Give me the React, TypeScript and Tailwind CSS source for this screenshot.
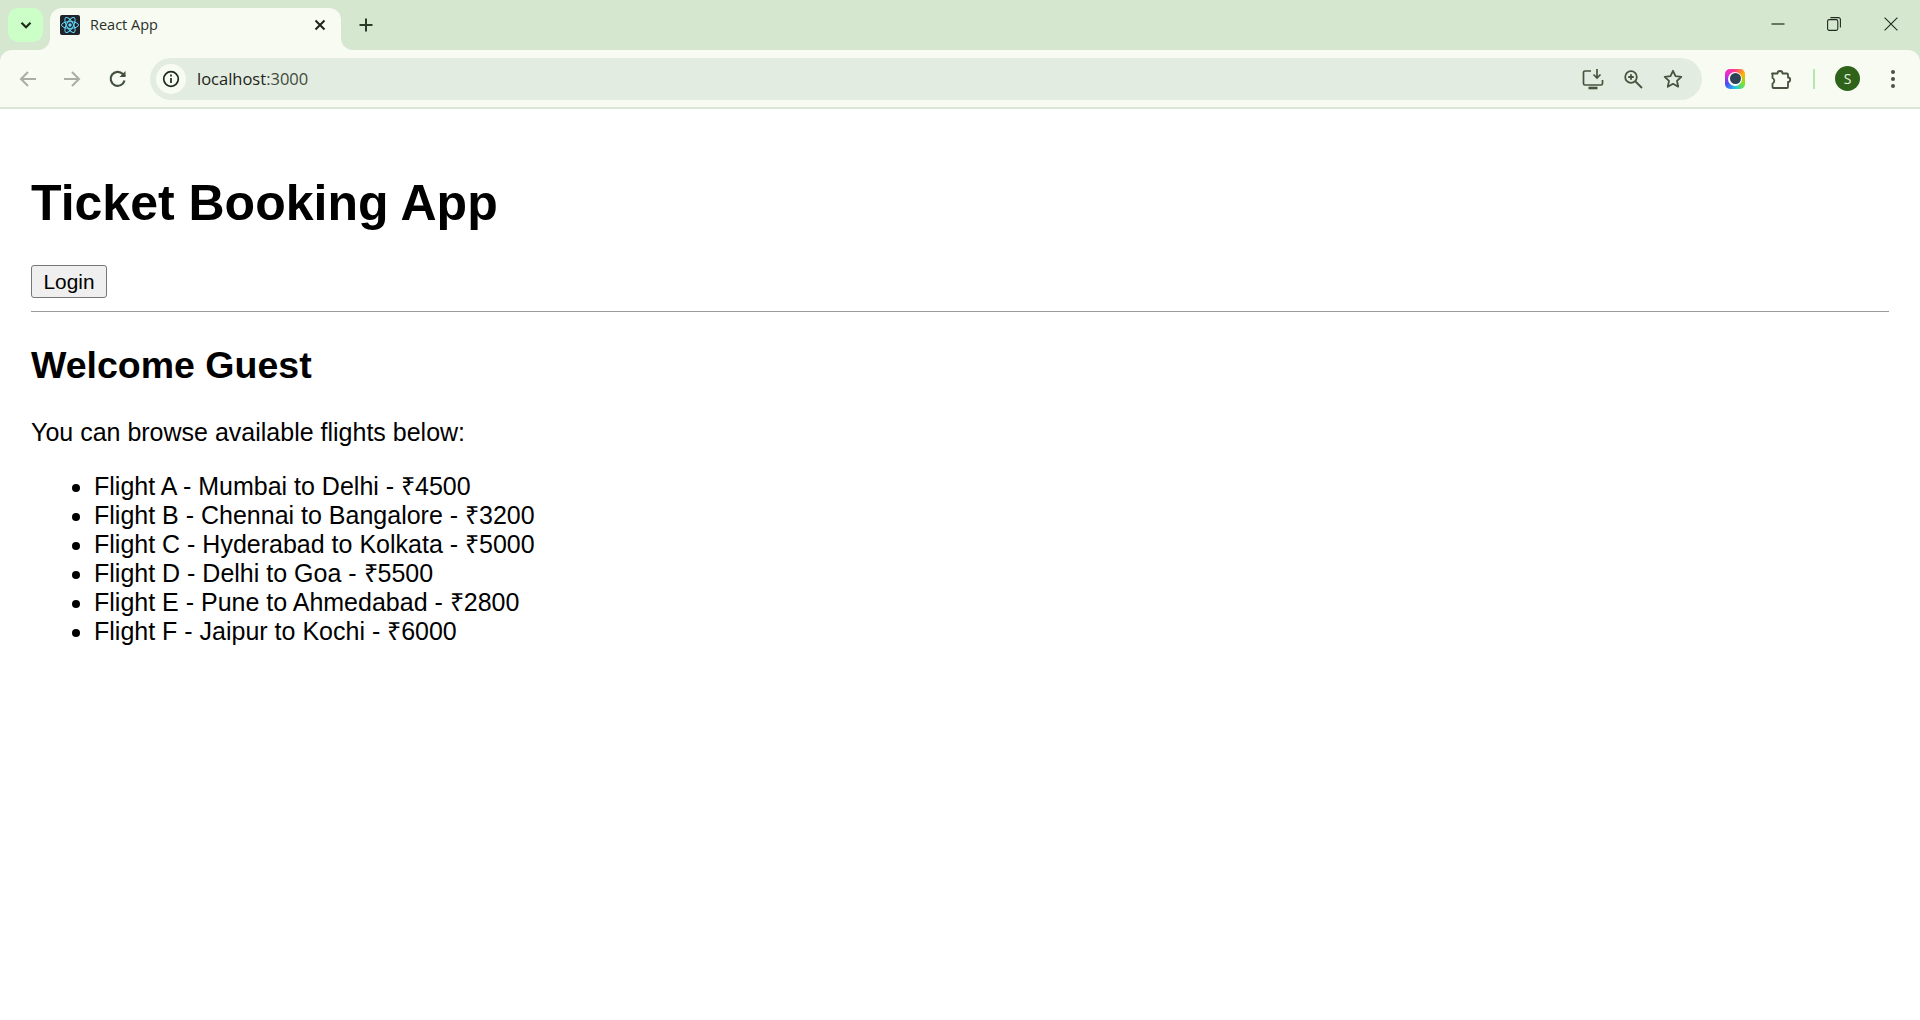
import React from "react";

const flights = [
  "Flight A - Mumbai to Delhi - ₹4500",
  "Flight B - Chennai to Bangalore - ₹3200",
  "Flight C - Hyderabad to Kolkata - ₹5000",
  "Flight D - Delhi to Goa - ₹5500",
  "Flight E - Pune to Ahmedabad - ₹2800",
  "Flight F - Jaipur to Kochi - ₹6000",
];

function ReactLogo() {
  return (
    <svg width="20" height="20" viewBox="0 0 20 20" className="rounded-[2px] bg-[#20232a]">
      <g fill="none" stroke="#61dafb" strokeWidth="1">
        <ellipse cx="10" cy="10" rx="8.5" ry="3.4" />
        <ellipse cx="10" cy="10" rx="8.5" ry="3.4" transform="rotate(60 10 10)" />
        <ellipse cx="10" cy="10" rx="8.5" ry="3.4" transform="rotate(120 10 10)" />
      </g>
      <circle cx="10" cy="10" r="1.7" fill="#61dafb" />
    </svg>
  );
}

export default function App() {
  return (
    <div className="min-h-[1020px] bg-white font-['Liberation_Sans',Arial,sans-serif] text-black">
      <header className="bg-[#d6e7d0]">
        <div className="flex h-[50px] pl-[8px]">
          <button className="mt-[8px] flex h-[34px] w-[35px] items-center justify-center rounded-[10px] bg-[#ccffc8]">
            <svg width="14" height="14" viewBox="0 0 14 14" fill="none" stroke="#1d2a1b" strokeWidth="2.2">
              <path d="M2.5 4.8 7 9.2l4.5-4.4" />
            </svg>
          </button>
          <div className="relative ml-[7px] mt-[8px] flex h-[42px] w-[291px] items-center rounded-t-[12px] bg-[#f7fbf2] pb-[8px] pl-[10px] pr-[14px]">
            <svg className="absolute bottom-0 left-[-12px]" width="12" height="12" viewBox="0 0 12 12">
              <path d="M12 0v12H0A12 12 0 0 0 12 0Z" fill="#f7fbf2" />
            </svg>
            <svg className="absolute bottom-0 right-[-12px]" width="12" height="12" viewBox="0 0 12 12">
              <path d="M0 0v12h12A12 12 0 0 1 0 0Z" fill="#f7fbf2" />
            </svg>
            <ReactLogo />
            <span className="ml-[10px] flex-1 font-['Open_Sans',sans-serif] text-[14.5px] leading-[20px] text-[#2b2f2a]">React App</span>
            <svg width="14" height="14" viewBox="0 0 14 14" fill="none" stroke="#1c241b" strokeWidth="2">
              <path d="m2.5 2.5 9 9m0-9-9 9" />
            </svg>
          </div>
          <button className="ml-[14px] mt-[8px] flex h-[34px] w-[22px] items-center justify-center">
            <svg width="16" height="16" viewBox="0 0 16 16" fill="none" stroke="#2b3a29" strokeWidth="2">
              <path d="M8 1.5v13M1.5 8h13" />
            </svg>
          </button>
          <div className="flex-1" />
          <div className="flex h-[48px] items-center">
            <span className="flex w-[56px] justify-center">
              <svg width="14" height="14" viewBox="0 0 14 14" fill="none" stroke="#1f2a1e" strokeWidth="1.2">
                <path d="M0.5 7h13" />
              </svg>
            </span>
            <span className="flex w-[56px] justify-center">
              <svg width="14" height="14" viewBox="0 0 14 14" fill="none" stroke="#1f2a1e" strokeWidth="1.1">
                <rect x="0.6" y="2.6" width="10.2" height="10.8" rx="1.6" />
                <path d="M3.4 0.6h8a2 2 0 0 1 2 2v8" />
              </svg>
            </span>
            <span className="flex w-[58px] justify-center">
              <svg width="14" height="14" viewBox="0 0 14 14" fill="none" stroke="#1f2a1e" strokeWidth="1.1">
                <path d="m0.6 0.6 12.8 12.8m0-12.8L0.6 13.4" />
              </svg>
            </span>
          </div>
        </div>
        <div className="flex h-[57px] items-center rounded-t-[12px] bg-[#f7fbf2] pl-[16px]">
          <svg width="24" height="24" viewBox="0 0 24 24" fill="none" stroke="#a9aea6" strokeWidth="2">
            <path d="M20 12H5m7-7-7 7 7 7" />
          </svg>
          <svg className="ml-[20px]" width="24" height="24" viewBox="0 0 24 24" fill="none" stroke="#a9aea6" strokeWidth="2">
            <path d="M4 12h15m-7-7 7 7-7 7" />
          </svg>
          <svg className="ml-[22px]" width="24" height="24" viewBox="0 0 24 24" fill="none" stroke="#41503e" strokeWidth="2.2">
            <path d="M18.5 13.5A7 7 0 1 1 16.8 7L19 9.2" />
            <path d="M19.5 4v6h-6Z" stroke="none" fill="#41503e" />
          </svg>
          <div className="ml-[20px] flex h-[42px] w-[1552px] items-center rounded-full bg-[#e3ece0] pl-[6px] pr-[19px]">
            <span className="flex h-[30px] w-[30px] items-center justify-center rounded-full bg-[#f7fbf2]">
              <svg width="18" height="18" viewBox="0 0 18 18" fill="none" stroke="#1f2a1e" strokeWidth="1.7">
                <circle cx="9" cy="9" r="7.3" />
                <path d="M9 8v5M9 4.6v1.9" />
              </svg>
            </span>
            <span className="ml-[11px] flex-1 font-['Open_Sans',sans-serif] text-[16.5px] leading-[24px] text-[#1d241c]">
              localhost<span className="text-[#3f4a3c]">:3000</span>
            </span>
            <svg width="22" height="22" viewBox="0 0 22 22" fill="none" stroke="#47533f" strokeWidth="1.7">
              <path d="M9 3H3a1.5 1.5 0 0 0-1.5 1.5v11A1.5 1.5 0 0 0 3 17h16a1.5 1.5 0 0 0 1.5-1.5V12" />
              <path d="M15 1v9m-3.5-3.5L15 10l3.500-3.500" />
              <path d="M6.500 20h9" strokeWidth="2.600" />
            </svg>
            <svg className="ml-[19px]" width="20" height="20" viewBox="0 0 20 20" fill="none" stroke="#47533f" strokeWidth="1.800">
              <circle cx="8" cy="8" r="5.800" />
              <path d="m12.500 12.500 6.500 6.500M8 5.200v5.600M5.200 8h5.600" />
            </svg>
            <svg className="ml-[20px]" width="20" height="20" viewBox="0 0 20 20" fill="none" stroke="#47533f" strokeWidth="1.800" strokeLinejoin="round">
              <path d="m10 1.800 2.500 5.400 5.800.7-4.300 4 1.200 5.800L10 14.800l-5.200 2.900L6 11.900 1.700 7.900l5.800-.7Z" />
            </svg>
          </div>
          <div className="ml-[23px] h-[20px] w-[20px] rounded-[5px] bg-[conic-gradient(#ff3d8b,#ffb300,#7be32e,#22c8ee,#4b4bf0,#e52bd0,#ff3d8b)] p-[3px]">
            <div className="flex h-[14px] w-[14px] items-center justify-center rounded-full bg-white">
              <div className="h-[11px] w-[11px] rounded-full bg-[#2c4257]" />
            </div>
          </div>
          <svg className="ml-[25px]" width="22" height="22" viewBox="0 0 22 22" fill="none" stroke="#47533f" strokeWidth="1.800" strokeLinejoin="round">
            <path d="M2 5.500h5.500a2.500 2.500 0 0 1 5 0H17a1 1 0 0 1 1 1v3a2.200 2.200 0 0 1 0 4.400V19a1 1 0 0 1-1 1H3.500a1 1 0 0 1-1-1v-3.500a3 3 0 0 0 0-5.500V6.500Z" />
          </svg>
          <div className="ml-[21px] h-[20px] w-[2px] bg-[#b4e8ac]" />
          <div className="ml-[20px] flex h-[25px] w-[25px] items-center justify-center rounded-full bg-[#2e6319] font-['Open_Sans',sans-serif] text-[14px] text-[#e8f3e2]">S</div>
          <svg className="ml-[30px]" width="6" height="20" viewBox="0 0 6 20" fill="#47533f">
            <circle cx="3" cy="3" r="2" />
            <circle cx="3" cy="10" r="2" />
            <circle cx="3" cy="17" r="2" />
          </svg>
        </div>
        <div className="h-[2px] bg-[#dde5d9]" />
      </header>
      <main className="px-[31px] text-[25px]">
        <h1 className="pt-[66px] text-[50px] font-bold leading-[56px]">Ticket Booking App</h1>
        <button className="mt-[34px] block h-[33px] rounded-[3px] border border-[#767676] bg-[#efefef] px-[11.5px] text-[20.83px] leading-[23px]">Login</button>
        <hr className="mt-[13px] h-[1px] border-0 bg-[#9a9a9a]" />
        <h2 className="mt-[32px] text-[37.5px] font-bold leading-[42px]">Welcome Guest</h2>
        <p className="mt-[32px] leading-[29px]">You can browse available flights below:</p>
        <ul className="mt-[25px] list-disc pl-[63px]">
          {flights.map((f) => (
            <li key={f} className="leading-[29px]">{f}</li>
          ))}
        </ul>
      </main>
    </div>
  );
}
